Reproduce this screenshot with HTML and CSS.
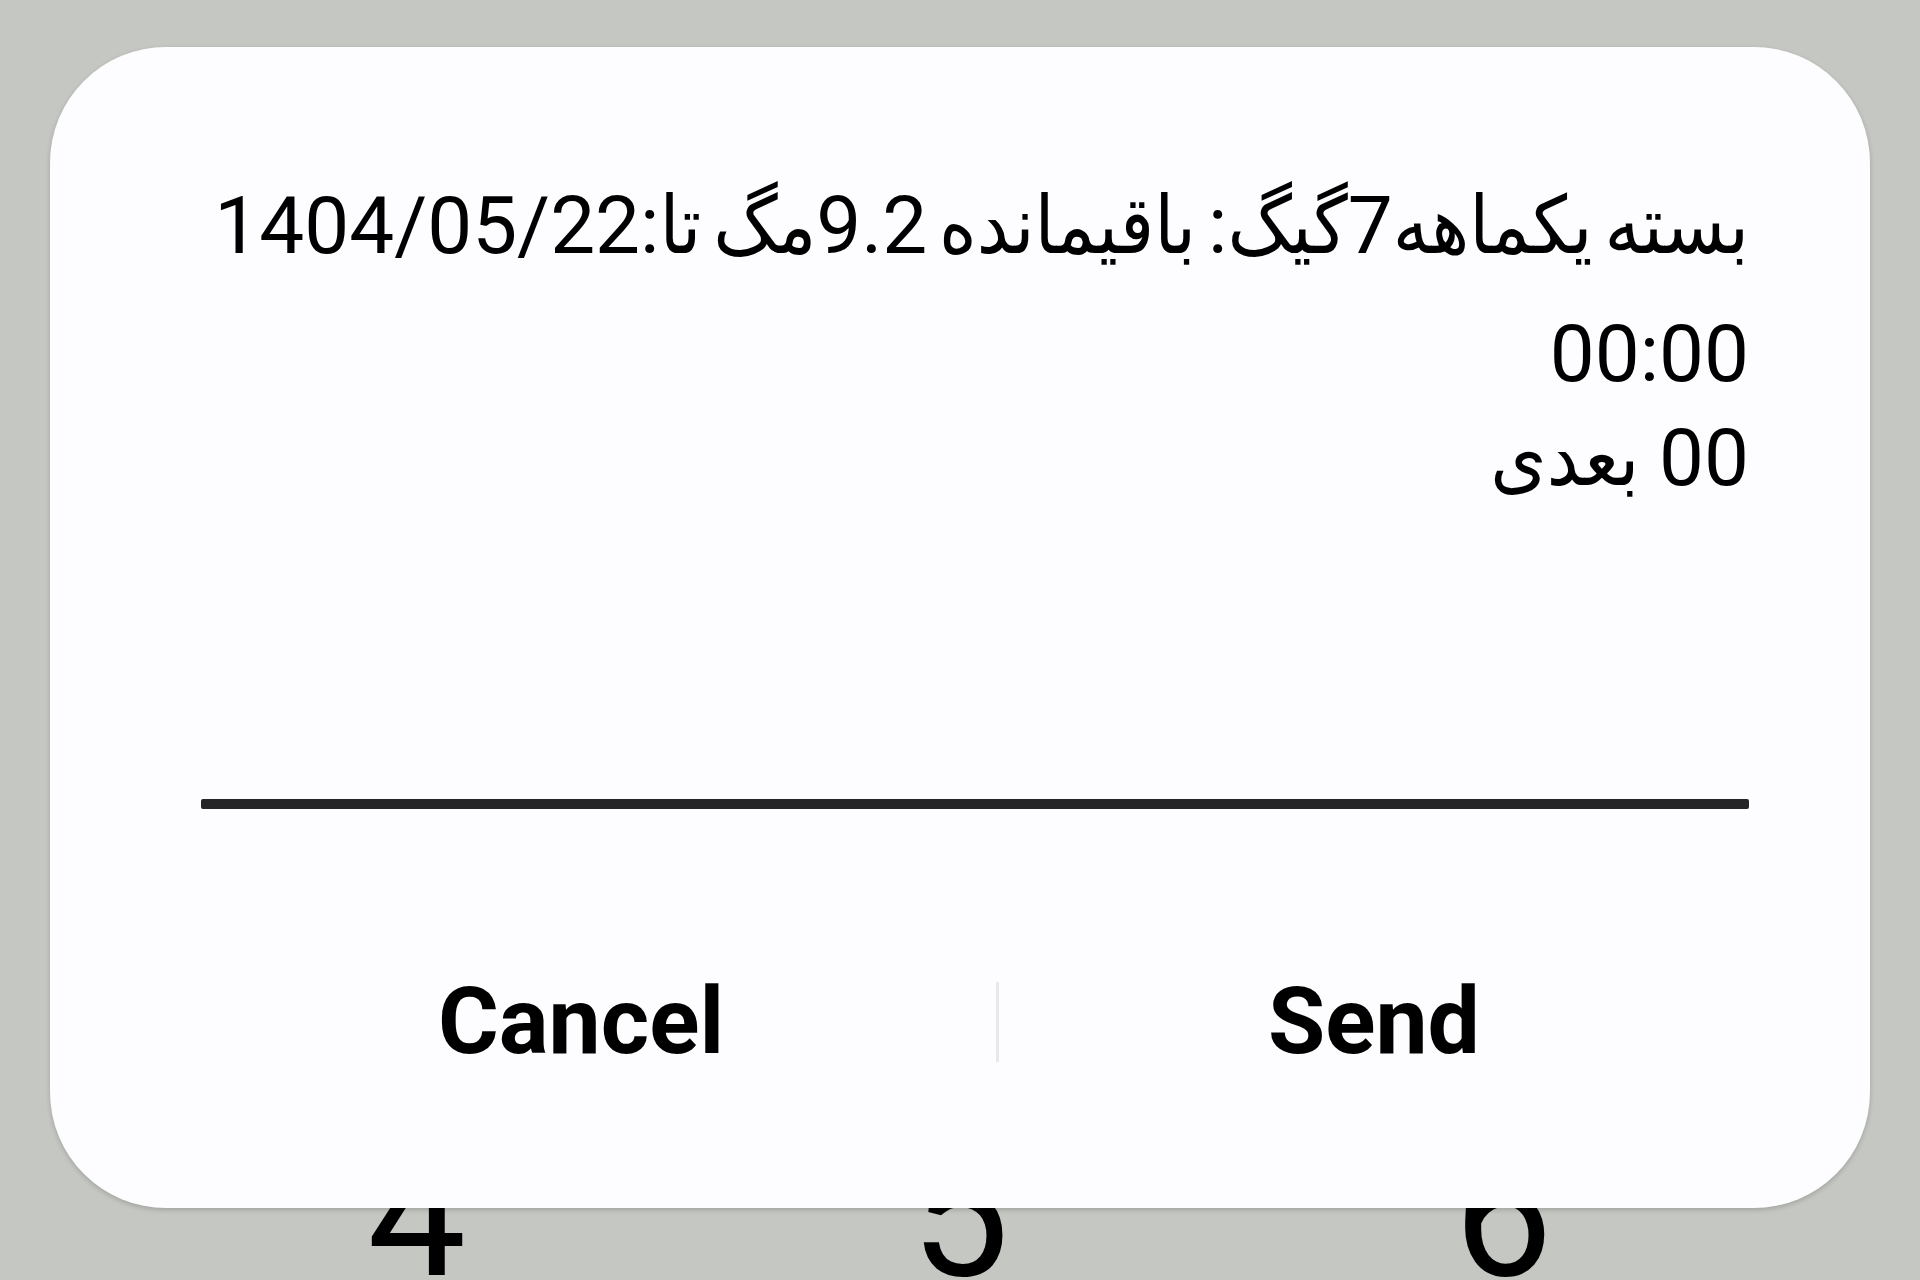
FILE: index.html
```html
<html>
    <head>
        <title>USSD</title>
        <link rel="stylesheet" href="styles.css">
    </head>
    <body>
        <div class="keypad">
            <span class="key">4</span>
            <span class="key">5</span>
            <span class="key">6</span>
        </div>

        <!-- dialog over the dialer -->
        <div class="dialog">
            <div class="message" dir="rtl">
                <div class="line first">بسته یکماهه7گیگ: باقیمانده 9.2مگ تا:1404/05/22</div>
                <div class="line">00:00</div>
                <div class="line">00 بعدی</div>
            </div>
            <div class="rule"></div>
            <div class="actions">
                <span class="btn">Cancel</span>
                <span class="divider"></span>
                <span class="btn">Send</span>
            </div>
        </div>
    </body>
</html>
```

FILE: styles.css
```css
body{
    margin: 0;
    height: 1280px;
    overflow: hidden;
    background-color: #c5c7c2;
    font-family: Roboto, "DejaVu Sans", sans-serif;
    position: relative;
}
.keypad{
    display: grid;
    grid-template-columns: repeat(3, 1fr);
    padding: 0 145px;
    margin-top: 1127px;
    font-size: 176px;
    line-height: 176px;
    color: #000;
}
.key{
    text-align: center;
}
.dialog{
    position: absolute;
    top: 47px;
    left: 50px;
    width: 1820px;
    height: 1161px;
    box-sizing: border-box;
    padding-top: 127px;
    background-color: #fdfdff;
    border-radius: 116px;
    box-shadow: 0 2px 5px rgba(0,0,0,0.18);
}
.message{
    padding: 0 121px 0 151px;
    font-family: Roboto, "DejaVu Sans Condensed", "DejaVu Sans", sans-serif;
    font-size: 80px;
    line-height: 104px;
    color: #000;
}
.line{
    white-space: nowrap;
}
.line.first{
    margin-bottom: 24px;
    word-spacing: -8px;
}
.rule{
    height: 10px;
    margin: 289px 121px 0 151px;
    background-color: #252527;
    border-radius: 2px;
}
.actions{
    display: grid;
    grid-template-columns: 830px 3px 1fr;
    align-items: center;
    margin-top: 166px;
    padding: 0 121px 0 116px;
}
.btn{
    text-align: center;
    font-size: 93px;
    line-height: 93px;
    font-weight: 700;
    color: #000;
}
.divider{
    height: 80px;
    background-color: #e8e8ea;
}
```
